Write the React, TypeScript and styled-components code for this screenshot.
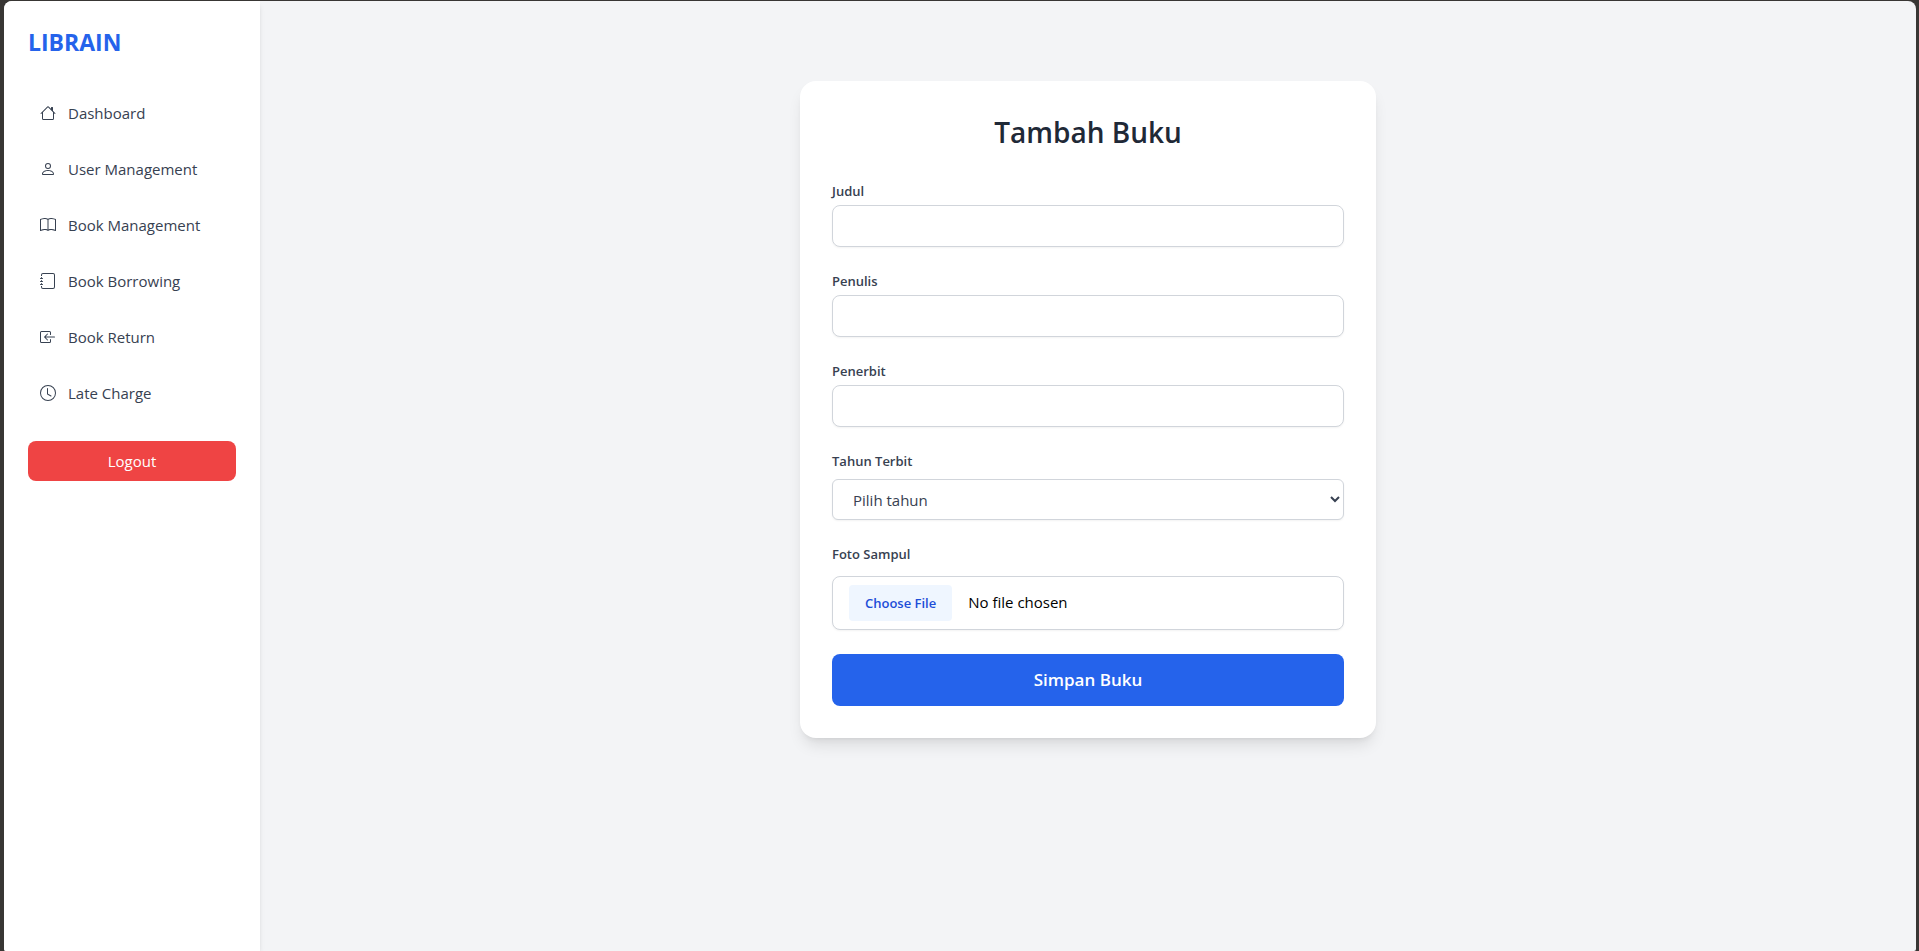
import React from "react";
import styled, { createGlobalStyle } from "styled-components";
import {
  BsBook,
  BsBoxArrowInLeft,
  BsClock,
  BsHouse,
  BsJournal,
  BsPerson,
} from "react-icons/bs";

const GlobalStyle = createGlobalStyle`
  *, *::before, *::after { box-sizing: border-box; }
  body {
    margin: 0;
    background: #383634;
    color: #000;
    font-family: "Segoe UI", "Open Sans", "Noto Sans", sans-serif;
    font-size: 15px;
    line-height: 24px;
  }
  h1, h2, ul { margin: 0; padding: 0; }
  button, input, select { font: inherit; color: inherit; margin: 0; }
`;

const Frame = styled.div`
  display: flex;
  min-height: 100vh;
  padding: 1px 3px 0 4px;
`;

const Shell = styled.div`
  display: flex;
  flex: 1;
  overflow: hidden;
  background: #f3f4f6;
  border-radius: 8px 8px 2px 2px;
`;

const Sidebar = styled.aside`
  flex: 0 0 256px;
  padding: 24px;
  background: #fff;
  box-shadow: 0 4px 6px -1px rgb(0 0 0 / 0.1), 0 2px 4px -2px rgb(0 0 0 / 0.1);
`;

const Brand = styled.h1`
  margin-bottom: 30px;
  color: #2563eb;
  font-size: 23px;
  font-weight: 700;
  line-height: 34px;
`;

const NavList = styled.ul`
  display: grid;
  gap: 8px;
  margin-bottom: 24px;
  list-style: none;
`;

const NavLink = styled.a`
  display: flex;
  align-items: center;
  gap: 12px;
  padding: 12px;
  border-radius: 8px;
  color: #374151;
  text-decoration: none;

  &:hover { background: #eff6ff; }
`;

const LogoutButton = styled.button`
  width: 100%;
  padding: 8px 16px;
  border: 0;
  border-radius: 8px;
  background: #ef4444;
  color: #fff;
  font-weight: 500;
  cursor: pointer;
`;

const Main = styled.main`
  flex: 1;
  padding: 80px 24px 32px;
`;

const Card = styled.section`
  max-width: 576px;
  margin: 0 auto;
  padding: 32px;
  background: #fff;
  border-radius: 16px;
  box-shadow: 0 10px 15px -3px rgb(0 0 0 / 0.1), 0 4px 6px -4px rgb(0 0 0 / 0.1);
`;

const Title = styled.h2`
  margin-bottom: 30px;
  color: #1f2937;
  font-size: 28px;
  font-weight: 600;
  line-height: 38px;
  text-align: center;
`;

const Form = styled.form`
  display: grid;
  gap: 24px;
`;

const Field = styled.div<{ $gap: number }>`
  display: grid;
  gap: ${(p) => p.$gap}px;
`;

const Label = styled.label`
  color: #374151;
  font-size: 13px;
  font-weight: 600;
  line-height: 20px;
`;

const TextInput = styled.input`
  width: 100%;
  height: 42px;
  padding: 8px 16px;
  border: 1px solid #d1d5db;
  border-radius: 8px;
  background: #fff;
  box-shadow: 0 1px 2px rgb(0 0 0 / 0.05);
`;

const Select = styled.select`
  width: 100%;
  height: 41px;
  padding: 8px 0 8px 16px;
  border: 1px solid #d1d5db;
  border-radius: 6px;
  background: #fff;
  color: #374151;
  box-shadow: 0 1px 2px rgb(0 0 0 / 0.05);
`;

const FileInput = styled.input`
  width: 100%;
  padding: 8px 16px;
  border: 1px solid #d1d5db;
  border-radius: 8px;
  background: #fff;
  box-shadow: 0 1px 2px rgb(0 0 0 / 0.05);

  &::file-selector-button {
    margin: 0 16px 0 0;
    padding: 8px 16px;
    border: 0;
    border-radius: 4px;
    background: #eff6ff;
    color: #1d4ed8;
    font-family: inherit;
    font-size: 13px;
    font-weight: 600;
    line-height: 20px;
  }
`;

const SubmitButton = styled.button`
  width: 100%;
  padding: 12px 16px;
  border: 0;
  border-radius: 8px;
  background: #2563eb;
  color: #fff;
  font-size: 17px;
  font-weight: 600;
  line-height: 28px;
  cursor: pointer;
`;

const navItems = [
  { label: "Dashboard", Icon: BsHouse },
  { label: "User Management", Icon: BsPerson },
  { label: "Book Management", Icon: BsBook },
  { label: "Book Borrowing", Icon: BsJournal },
  { label: "Book Return", Icon: BsBoxArrowInLeft },
  { label: "Late Charge", Icon: BsClock },
];

const textFields = [
  { id: "judul", label: "Judul" },
  { id: "penulis", label: "Penulis" },
  { id: "penerbit", label: "Penerbit" },
];

export default function App() {
  return (
    <Frame>
      <GlobalStyle />
      <Shell>
        <Sidebar>
          <Brand>LIBRAIN</Brand>
          <nav>
            <NavList>
              {navItems.map(({ label, Icon }) => (
                <li key={label}>
                  <NavLink href="#">
                    <Icon size={16} aria-hidden />
                    {label}
                  </NavLink>
                </li>
              ))}
            </NavList>
          </nav>
          <LogoutButton type="button">Logout</LogoutButton>
        </Sidebar>
        <Main>
          <Card>
            <Title>Tambah Buku</Title>
            <Form onSubmit={(e) => e.preventDefault()}>
              {textFields.map(({ id, label }) => (
                <Field key={id} $gap={4}>
                  <Label htmlFor={id}>{label}</Label>
                  <TextInput id={id} name={id} type="text" />
                </Field>
              ))}
              <Field $gap={8}>
                <Label htmlFor="tahun">Tahun Terbit</Label>
                <Select id="tahun" name="tahun" defaultValue="">
                  <option value="">Pilih tahun</option>
                  <option value="2025">2025</option>
                  <option value="2024">2024</option>
                  <option value="2023">2023</option>
                </Select>
              </Field>
              <Field $gap={12}>
                <Label htmlFor="sampul">Foto Sampul</Label>
                <FileInput id="sampul" name="sampul" type="file" />
              </Field>
              <SubmitButton type="submit">Simpan Buku</SubmitButton>
            </Form>
          </Card>
        </Main>
      </Shell>
    </Frame>
  );
}
